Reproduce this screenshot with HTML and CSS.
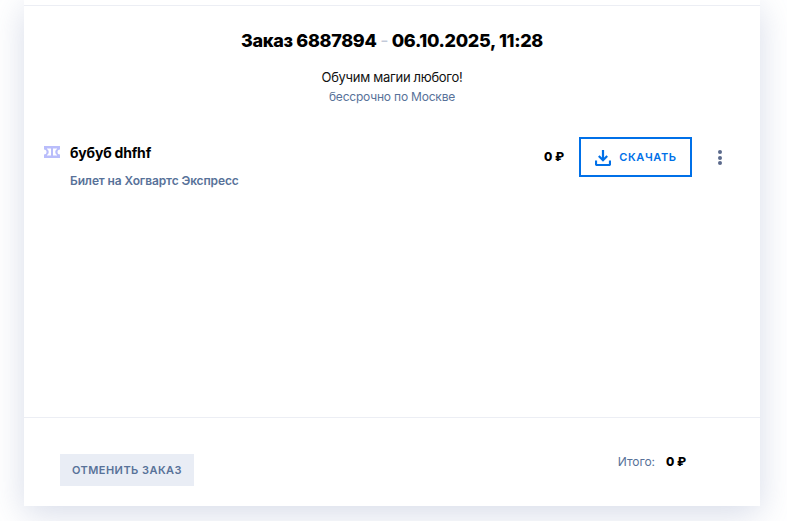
FILE: index.html
```html
<!DOCTYPE html>
<html lang="ru">
<head>
<meta charset="utf-8">
<title>Заказ 6887894</title>
<link rel="stylesheet" href="styles.css">
</head>
<body>
<main class="card">
  <header class="head">
    <h1 class="title">Заказ 6887894 <span class="dash">-</span> 06.10.2025, 11:28</h1>
    <p class="event">Обучим магии любого!</p>
    <p class="when">бессрочно по Москве</p>
  </header>
  <section class="items">
    <div class="item">
      <svg class="ticket" width="16" height="12" viewBox="0 0 16 12"><path fill="#b9bdfb" fill-rule="evenodd" d="M0 0h16v3.500a2.500 2.500 0 0 0 0 5V12H0V8.500a2.500 2.500 0 0 0 0-5V0zm3 2.500v.4a3.600 3.600 0 0 1 0 6.200v.4h10v-.4a3.600 3.600 0 0 1 0-6.200v-.4H3z"/><path fill="#b9bdfb" d="M7 2h2v8H7z"/></svg>
      <div class="info">
        <div class="name">бубуб dhfhf</div>
        <div class="type">Билет на Хогвартс Экспресс</div>
      </div>
      <div class="price">0 ₽</div>
      <a class="download" href="#">
        <svg width="16" height="17" viewBox="0 0 16 17" fill="none" stroke="#0070e8" stroke-width="2.200"><path d="M8 1v10M3.800 7 8 11.200 12.200 7"/><path d="M1 11.500V15a1 1 0 0 0 1 1h12a1 1 0 0 0 1-1v-3.500"/></svg>
        <span>Скачать</span>
      </a>
      <div class="more"><i></i><i></i><i></i></div>
    </div>
  </section>
  <footer class="foot">
    <button class="cancel">Отменить заказ</button>
    <div class="total"><span class="label">Итого:</span><b>0 ₽</b></div>
  </footer>
</main>
</body>
</html>
```
FILE: styles.css
```css
* { box-sizing: border-box; }
html, body { margin: 0; height: 100%; }
body {
  background: #fff;
  font-family: Inter, "Noto Sans", sans-serif;
  overflow: hidden;
}
.card {
  width: 736px;
  height: 506px;
  margin-left: 24px;
  padding-top: 5px;
  background: #fff;
  box-shadow: 0 8px 32px rgba(100, 120, 170, .26);
  display: flex;
  flex-direction: column;
}
.head {
  border-top: 1px solid #eceef4;
  padding-top: 24px;
  text-align: center;
}
.title {
  margin: 0;
  font-size: 18px;
  line-height: 22px;
  font-weight: 800;
  letter-spacing: -.32px;
  color: #000;
}
.dash { color: #c3cad9; font-weight: 400; }
.event {
  margin: 17px 0 0;
  font-size: 13px;
  line-height: 16px;
  letter-spacing: -.3px;
  color: #111;
}
.when {
  margin: 4px 0 0;
  font-size: 12px;
  line-height: 16px;
  letter-spacing: -.2px;
  color: #587299;
}
.items { flex: 1; padding: 32px 0 0 20px; }
.item { display: flex; align-items: flex-start; }
.ticket { margin-top: 9px; flex: none; }
.info { margin-left: 10px; width: 474px; margin-top: 7px; }
.name { font-size: 14px; line-height: 18px; font-weight: 700; letter-spacing: -.2px; color: #000; }
.type { margin-top: 11px; font-size: 12px; line-height: 15px; font-weight: 600; letter-spacing: -.12px; color: #587299; }
.price { width: 35px; margin-top: 12px; font-size: 12px; line-height: 16px; font-weight: 800; color: #000; white-space: nowrap; }
.download {
  width: 113px;
  height: 40px;
  border: 2px solid #0070e8;
  display: flex;
  align-items: center;
  justify-content: center;
  gap: 8px;
  text-decoration: none;
  color: #0070e8;
  font-size: 11px;
  font-weight: 600;
  letter-spacing: .6px;
  text-transform: uppercase;
}
.download svg { margin-left: 1px; }
.more { margin: 13px 0 0 26px; display: flex; flex-direction: column; gap: 1.5px; }
.more i { width: 4px; height: 4px; border-radius: 50%; background: #5b6a8c; }
.foot {
  height: 89px;
  border-top: 1px solid #eceef4;
  padding: 36px 74px 0 36px;
  display: flex;
  justify-content: space-between;
  align-items: flex-start;
}
.cancel {
  width: 134px;
  height: 32px;
  border: 0;
  padding: 0;
  background: #e9edf5;
  color: #587299;
  font: 600 11px Inter, sans-serif;
  letter-spacing: .45px;
  text-transform: uppercase;
}
.total { display: flex; align-items: center; gap: 11px; height: 14px; font-size: 12px; }
.label { color: #587299; letter-spacing: -.05px; }
.total b { font-weight: 800; color: #000; }
```
